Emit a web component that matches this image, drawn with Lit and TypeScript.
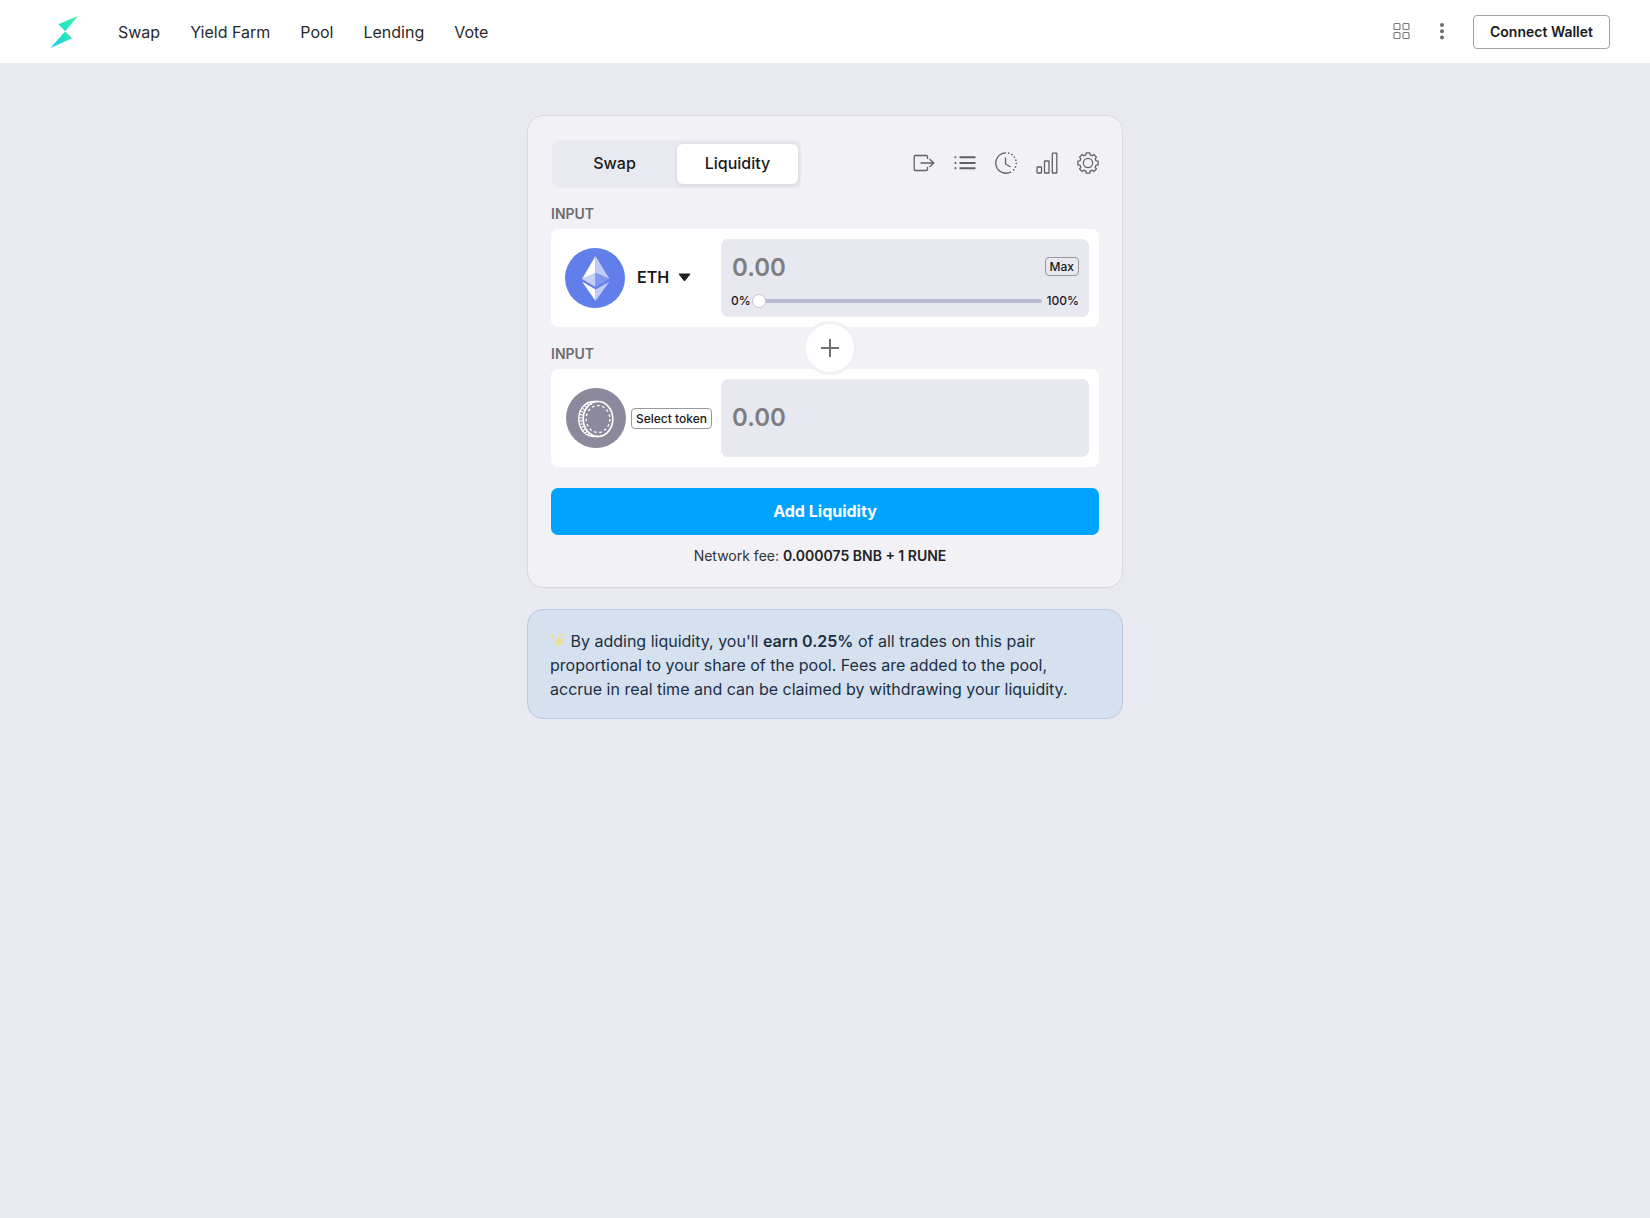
import { LitElement, html, css, svg } from "lit";
import { customElement, state } from "lit/decorators.js";

const links = ["Swap", "Yield Farm", "Pool", "Lending", "Vote"];

const gearPath = (() => {
  const teeth = 8;
  const pts: string[] = [];
  for (let i = 0; i < teeth; i++) {
    const mid = (i * 2 * Math.PI) / teeth;
    for (const [offset, radius] of [[-0.25, 8.4], [-0.18, 10.3], [0.18, 10.3], [0.25, 8.4]]) {
      const x = 11 + radius * Math.sin(mid + offset);
      const y = 11 - radius * Math.cos(mid + offset);
      pts.push(`${x.toFixed(2)} ${y.toFixed(2)}`);
    }
  }
  return `M${pts.join("L")}Z`;
})();

const tools = [
  {
    label: "Withdraw",
    art: svg`<path d="M14.5 7V4.500Q14.500 3.500 13.500 3.500H2.200Q1.200 3.500 1.200 4.500V17.500Q1.200 18.500 2.200 18.500H13.500Q14.500 18.500 14.500 17.500V15"/><path d="M7.500 11H20.500M16.500 7L20.800 11L16.500 15"/>`,
  },
  {
    label: "Positions",
    art: svg`<path stroke-width="2" d="M5.500 5.200H21.500M5.500 11H21.500M5.500 16.300H21.500"/><path stroke-width="2" d="M.6 5.200H2.300M.6 11H2.300M.6 16.300H2.300"/>`,
  },
  {
    label: "History",
    art: svg`<path d="M11 .8A10.200 10.200 0 1 0 16 19.900"/><path stroke-width="1.500" stroke-dasharray="1.500 1.900" d="M13 1A10.200 10.200 0 0 1 17 19.300"/><path d="M10.500 5.500V12L15.500 15"/>`,
  },
  {
    label: "Statistics",
    art: svg`<rect x="1" y="15" width="4.500" height="6" rx=".6"/><rect x="8.500" y="9" width="4.500" height="12" rx=".6"/><rect x="16.300" y="1.200" width="4.500" height="19.800" rx=".6"/>`,
  },
  {
    label: "Settings",
    art: svg`<path stroke-linejoin="round" d=${gearPath}/><circle cx="11" cy="11" r="4.600"/>`,
  },
];

@customElement("app-header")
export class AppHeader extends LitElement {
  static styles = css`
    :host { display: block; background: #fff; }
    .bar { display: flex; align-items: center; height: 63px; padding: 0 40px 0 50px; box-sizing: border-box; }
    .logo { display: block; margin-right: 40px; }
    .logo svg { display: block; }
    nav { display: flex; gap: 30px; flex: 1; }
    a { color: #2a2a2c; text-decoration: none; font-size: 16px; line-height: 24px; }
    .icon { border: 0; background: none; padding: 0; width: 20px; height: 20px; margin-right: 20px; }
    .icon svg { display: block; }
    .more { margin-right: 21px; }
    .wallet {
      font: 600 14px/20px Inter, sans-serif; color: #1a1a1c; background: #fff;
      border: 1px solid #a3a3a8; border-radius: 4px; padding: 6px 16px;
    }
  `;
  render() {
    return html`
      <header class="bar">
        <a class="logo" href="#" aria-label="Home">
          <svg width="28" height="34" viewBox="0 0 28 34">
            <defs>
              <linearGradient id="upper" x1="0" y1="1" x2="1" y2="0"><stop stop-color="#17dfd2" /><stop offset="1" stop-color="#3af79b" /></linearGradient>
              <linearGradient id="lower" x1="0" y1="1" x2="1" y2="0"><stop stop-color="#16c8e8" /><stop offset="1" stop-color="#2df2ae" /></linearGradient>
            </defs>
            <path fill="url(#upper)" d="M28 1L15.200 16.200L8.300 9.300Z" />
            <path fill="url(#lower)" d="M15.200 16.200L22 23.300L.4 33Z" />
          </svg>
        </a>
        <nav>${links.map((l) => html`<a href="#">${l}</a>`)}</nav>
        <button class="icon" aria-label="Apps">
          <svg width="20" height="20" viewBox="0 0 20 20" fill="none" stroke="#777" stroke-width="1.1">
            <rect x="2" y="1.500" width="6" height="6" rx="1" /><rect x="11" y="1.500" width="6" height="6" rx="1" />
            <rect x="2" y="10.500" width="6" height="6" rx="1" /><rect x="11" y="10.500" width="6" height="6" rx="1" />
          </svg>
        </button>
        <button class="icon more" aria-label="More">
          <svg width="20" height="20" viewBox="0 0 20 20" fill="#6c6c70">
            <circle cx="10" cy="3" r="2" /><circle cx="10" cy="9.200" r="2" /><circle cx="10" cy="15.400" r="2" />
          </svg>
        </button>
        <button class="wallet">Connect Wallet</button>
      </header>
    `;
  }
}

@customElement("liquidity-card")
export class LiquidityCard extends LitElement {
  @state() private percent = 0;

  static styles = css`
    :host { display: block; }
    button { font-family: inherit; color: #1a1a1c; }
    svg { display: block; }
    .card { background: #f2f1f6; border: 1px solid #d8d8e0; border-radius: 16px; padding: 24px 23px 21px; }
    .top { display: flex; justify-content: space-between; align-items: center; padding-left: 1px; }
    .tabs { display: flex; gap: 2px; background: #e9e9f1; border-radius: 6px; padding: 4px 3px 4px 2px; }
    .tab {
      width: 121px; height: 40px; padding: 0 0 2px; border: 0; border-radius: 6px; background: none;
      font-size: 16px; font-weight: 500;
    }
    .active { background: #fff; box-shadow: 0 1px 4px #0000001a; }
    .tools { display: flex; gap: 19px; padding-bottom: 2px; }
    .tool { width: 22px; height: 22px; border: 0; padding: 0; background: none; }
    .label { display: block; font-size: 14px; line-height: 20px; font-weight: 600; color: #6c6c70; }
    .first { padding: 16px 0 5px; }
    .between { position: relative; padding: 17px 0 5px; }
    .panel {
      display: grid; grid-template-columns: 170px minmax(0, 1fr); background: #fff; border-radius: 7px;
      padding: 10px 10px 10px 0;
    }
    .asset { display: flex; align-items: center; padding-left: 14px; }
    .token { display: flex; align-items: center; gap: 9px; font-size: 16px; font-weight: 600; background: none; border: 0; padding: 0 0 2px 12px; }
    .empty { padding-left: 15px; }
    .small { border: 1px solid #98989f; border-radius: 4px; background: none; font-size: 12px; line-height: 17px; font-weight: 500; padding: 0 4px; }
    .max { margin-bottom: 4px; }
    .select { background: #fff; line-height: 19px; margin-left: 5px; white-space: nowrap; }
    .field {
      display: flex; flex-direction: column; justify-content: center; box-sizing: border-box; height: 78px;
      background: #e8e8f1; border-radius: 7px; padding: 0 10px;
    }
    .ranged { padding-top: 6px; }
    .row { display: flex; align-items: center; justify-content: space-between; }
    .amount {
      flex: 1; min-width: 0; box-sizing: border-box; border: 0; outline: 0; background: none; padding: 0 0 0 1px;
      font: 600 24px/30px Inter, sans-serif; height: 30px; color: #1a1a1c;
    }
    .amount::placeholder { color: #7d7d82; opacity: 1; }
    .scale { display: flex; align-items: center; gap: 5px; margin-top: 10px; font-size: 12px; line-height: 16px; font-weight: 500; color: #1a1a1c; }
    .range { flex: 1; min-width: 0; appearance: none; height: 14px; margin: 0 0 0 -4px; background: none; }
    .range::-webkit-slider-runnable-track { height: 4px; border-radius: 2px; background: #babace; }
    .range::-webkit-slider-thumb {
      appearance: none; width: 14px; height: 14px; margin-top: -5px; border-radius: 50%;
      box-sizing: border-box; background: #fff; border: 1px solid #c6c6cc;
    }
    .plus {
      position: absolute; left: calc(50% + 5px); top: 50%; transform: translate(-50%, -50%);
      width: 54px; height: 54px; display: grid; place-items: center; padding: 0;
      background: #fff; border: 3px solid #f0f0f5; border-radius: 50%;
    }
    .add {
      display: block; width: 100%; height: 47px; margin-top: 21px; padding: 0 0 2px; border: 0; border-radius: 7px;
      background: #00a3ff; color: #fff; font-size: 16px; font-weight: 700;
    }
    .fee { margin: 11px 0 0; padding-right: 10px; text-align: center; font-size: 14px; line-height: 20px; color: #333336; }
    .fee strong { font-weight: 600; color: #222225; }
  `;

  private onSlide(e: Event) {
    this.percent = Number((e.target as HTMLInputElement).value);
  }

  render() {
    return html`
      <section class="card">
        <div class="top">
          <div class="tabs">
            <button class="tab">Swap</button>
            <button class="tab active">Liquidity</button>
          </div>
          <div class="tools">
            ${tools.map((t) => html`<button class="tool" aria-label=${t.label}>
              <svg width="22" height="22" viewBox="0 0 22 22" fill="none" stroke="#626266" stroke-width="1.300">${t.art}</svg>
            </button>`)}
          </div>
        </div>
        <label class="label first" for="amount-a">INPUT</label>
        <div class="panel">
          <div class="asset">
            <svg width="60" height="60" viewBox="0 0 60 60">
              <circle cx="30" cy="30" r="30" fill="#627eea" />
              <path fill="#fff" d="M30.500 8L17 31L30.500 25Z" />
              <path fill="#c0cbf7" d="M30.500 8L44.500 31L30.500 25Z" />
              <path fill="#c6d0f8" d="M30.500 24.800L17 31L30.500 39Z" />
              <path fill="#8197ee" d="M30.500 24.800L44.500 31L30.500 39Z" />
              <path fill="#fff" d="M17 33.500L30.500 41.500V53Z" />
              <path fill="#c0cbf7" d="M44.500 33.500L30.500 41.500V53Z" />
            </svg>
            <button class="token">ETH
              <svg width="13" height="9" viewBox="0 0 13 9"><path fill="#1f1f22" stroke="#1f1f22" stroke-linejoin="round" d="M1 1H12L6.500 8Z" /></svg>
            </button>
          </div>
          <div class="field ranged">
            <div class="row">
              <input class="amount" id="amount-a" type="text" inputmode="decimal" placeholder="0.00" />
              <button class="small max">Max</button>
            </div>
            <div class="scale">
              <span>0%</span>
              <input class="range" type="range" aria-label="Share of balance" min="0" max="100" .value=${String(this.percent)} @input=${this.onSlide} />
              <span>100%</span>
            </div>
          </div>
        </div>
        <div class="between">
          <label class="label" for="amount-b">INPUT</label>
          <button class="plus" aria-label="Add pair">
            <svg width="20" height="20" viewBox="0 0 20 20" stroke="#707074" stroke-width="2"><path d="M10 1V19M1 10H19" /></svg>
          </button>
        </div>
        <div class="panel">
          <div class="asset empty">
            <svg width="60" height="60" viewBox="0 0 60 60" fill="none" stroke="#fff">
              <circle cx="30" cy="30" r="30" fill="#8b899b" stroke="none" />
              <ellipse cx="32" cy="31" rx="14.800" ry="17.500" stroke-width="1.600" />
              <ellipse cx="32" cy="31" rx="11.800" ry="13.500" stroke-width="1.300" stroke-dasharray="2.700 2.600" />
              <path stroke-width="1.400" d="M32 13.500H27C8 15 8 47 27 48.500H32" />
              <path stroke-width="3" stroke-dasharray="1.200 1.900" d="M25.500 15.200C11.500 19 11.500 43 25.500 46.800" />
            </svg>
            <button class="small select">Select token</button>
          </div>
          <div class="field">
            <div class="row">
              <input class="amount" id="amount-b" type="text" inputmode="decimal" placeholder="0.00" />
            </div>
          </div>
        </div>
        <button class="add">Add Liquidity</button>
        <p class="fee">Network fee: <strong>0.000075 BNB + 1 RUNE</strong></p>
      </section>
    `;
  }
}

@customElement("app-root")
export class AppRoot extends LitElement {
  static styles = css`
    :host { display: block; min-height: 100vh; background: #e9e9f1; font-family: Inter, "Liberation Sans", sans-serif; }
    main { max-width: 596px; margin: 0 auto; padding: 52px 0; }
    .note {
      margin: 21px 0 0; padding: 19px 23px 17px 22px; border: 1px solid #bccadd; border-radius: 16px;
      background: #d5e1ee; color: #1c2f44; font-size: 16px; line-height: 24px;
    }
    .note strong { font-weight: 600; }
    .spark { vertical-align: -1px; margin-right: 1px; }
  `;
  render() {
    return html`
      <app-header></app-header>
      <main>
        <liquidity-card></liquidity-card>
        <p class="note">
          <svg class="spark" width="15" height="15" viewBox="0 0 15 15" fill="#f0dd87">
            <path d="M8 3L10 6L14 5L11.500 8.500L14 11.500L10 11L8 14.500L7 10.500L3.500 9.500L7 7.500Z" />
            <path d="M2.500 1L3.200 2.800L5 3.500L3.200 4.200L2.500 6L1.800 4.200L0 3.500L1.800 2.800Z" />
            <path d="M12 0L12.600 1.700L14 2.300L12.600 3L12 4.500L11.300 3L10 2.300L11.300 1.700Z" />
          </svg>
          By adding liquidity, you'll <strong>earn 0.25%</strong> of all trades on this pair
          proportional to your share of the pool. Fees are added to the pool, accrue in real time
          and can be claimed by withdrawing your liquidity.
        </p>
      </main>
    `;
  }
}
